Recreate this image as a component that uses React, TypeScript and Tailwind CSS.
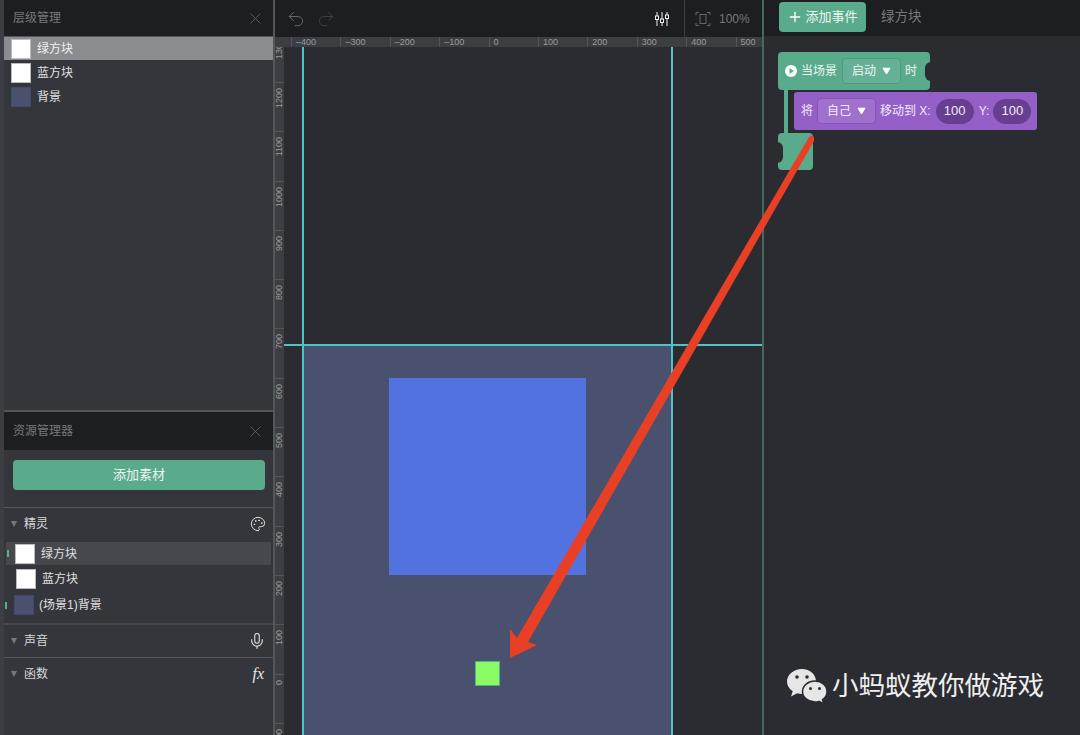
import { Mic, Palette, Plus, Redo2, Undo2, X } from "lucide-react";

const FONT = "font-['Liberation_Sans','Noto_Sans_CJK_SC',sans-serif]";

const xLabels = [-400, -300, -200, -100, 0, 100, 200, 300, 400, 500];
const yLabels = [1300, 1200, 1100, 1000, 900, 800, 700, 600, 500, 400, 300, 200, 100, 0, -100];

const PanelHeader = ({ title, height }: { title: string; height: string }) => (
  <header className={`${height} shrink-0 bg-[#1d1e22] flex items-center justify-between pl-[9px] pr-[8px]`}>
    <span className="text-xs text-[#77787c]">{title}</span>
    <X size={19} strokeWidth={1} className="text-[#66676b]" />
  </header>
);

const Section = ({ title, children }: { title: string; children: React.ReactNode }) => (
  <div className="flex items-center justify-between h-[32px] pl-[7px] pr-[7px]">
    <div className="flex items-center gap-[7px]">
      <span className="w-0 h-0 border-x-[3px] border-x-transparent border-t-[6px] border-t-[#77787c]"></span>
      <span className="text-xs text-[#d8d8da]">{title}</span>
    </div>
    {children}
  </div>
);

const Thumb = ({ blue }: { blue?: boolean }) =>
  blue ? (
    <div className="size-[20px] shrink-0 bg-[#4a516e] border border-[#44486a]"></div>
  ) : (
    <div className="size-[20px] shrink-0 bg-white border border-[#bbbbbb]"></div>
  );

const Triangle = () => (
  <svg width="9" height="8" viewBox="0 0 9 8" className="shrink-0">
    <path d="M1 1.200 H8 L4.500 7 Z" fill="#fff" stroke="#fff" strokeLinejoin="round" />
  </svg>
);

const App = () => {
  return (
    <div className={`${FONT} relative w-[1080px] h-[735px] overflow-hidden flex bg-[#2b2c31]`}>
      {/* Left panels */}
      <aside className="w-[275px] shrink-0 flex flex-col bg-[#35363b] border-l-[4px] border-l-[#3d3e43] border-r-2 border-r-[#55565a]">
        <section className="h-[410px] shrink-0 flex flex-col">
          <PanelHeader title="层级管理" height="h-[36px]" />
          <div className="flex items-center gap-[6px] h-[24px] pl-[7px] bg-[#8b8c90] border-t border-[#55565a]">
            <Thumb />
            <span className="text-xs text-[#f0f0f0]">绿方块</span>
          </div>
          <div className="flex items-center gap-[6px] h-[24px] mt-px pl-[7px]">
            <Thumb />
            <span className="text-xs text-[#e0e0e0]">蓝方块</span>
          </div>
          <div className="flex items-center gap-[6px] h-[24px] pl-[7px]">
            <Thumb blue />
            <span className="text-xs text-[#e0e0e0]">背景</span>
          </div>
        </section>
        <section className="flex-1 flex flex-col border-t-2 border-[#55565a]">
          <PanelHeader title="资源管理器" height="h-[38px]" />
          <div className="h-[58px] shrink-0 pt-[10px] px-[9px] border-b border-[#55565a]">
            <button className="w-[252px] h-[30px] rounded bg-[#5aaa8c] text-[13px] text-[#eef6f2]">添加素材</button>
          </div>
          <Section title="精灵">
            <Palette size={16} strokeWidth={1.4} className="text-[#e8e8e8]" />
          </Section>
          <div className="h-[85px] shrink-0 pt-[2px] border-b-2 border-[#47484d]">
            <div className="flex items-center h-[23px] ml-[2px] mr-[2px] bg-[#47484d]">
              <span className="w-[2px] h-[7px] ml-[1px] bg-[#5aaa8c]"></span>
              <span className="ml-[6px]">
                <Thumb />
              </span>
              <span className="ml-[6px] text-xs text-[#e0e0e0]">绿方块</span>
            </div>
            <div className="flex items-center h-[26px] mt-px pl-[12px]">
              <Thumb />
              <span className="ml-[6px] text-xs text-[#e0e0e0]">蓝方块</span>
            </div>
            <div className="flex items-center h-[26px] pl-[1px]">
              <span className="w-[2px] h-[7px] bg-[#5aaa8c]"></span>
              <span className="ml-[7px]">
                <Thumb blue />
              </span>
              <span className="ml-[5px] text-xs text-[#e0e0e0]">(场景1)背景</span>
            </div>
          </div>
          <div className="border-b border-[#55565a]">
            <Section title="声音">
              <Mic size={18} strokeWidth={1.4} className="text-[#e8e8e8]" />
            </Section>
          </div>
          <Section title="函数">
            <span className="font-['Liberation_Serif',serif] italic text-base text-[#e8e8e8] pr-[2px]">fx</span>
          </Section>
        </section>
      </aside>

      {/* Center */}
      <main className="w-[489px] shrink-0 flex flex-col border-r-2 border-[#4a6660]">
        <div className="h-[37px] shrink-0 bg-[#1d1e22] flex items-center pl-[11px]">
          <Undo2 size={20} strokeWidth={1.2} className="text-[#66676b]" />
          <Redo2 size={20} strokeWidth={1.2} className="ml-[10px] text-[#3d3e43]" />
          <svg width="16" height="16" viewBox="0 0 16 16" fill="none" stroke="#f0f0f0" strokeWidth="1" className="ml-[318px]">
            <path d="M3 1v4M3 9v6M8 1v7M8 12v3M13 1v3M13 8v7" />
            <rect x="1.500" y="5" width="3" height="3.500" />
            <rect x="6.500" y="8" width="3" height="3.500" />
            <rect x="11.500" y="4" width="3" height="3.500" />
          </svg>
          <div className="h-full ml-[14px] border-l border-[#3d3e43] flex items-center pl-[10px]">
            <svg width="16" height="16" viewBox="0 0 16 16" fill="none" stroke="#66676b" strokeWidth="1">
              <path d="M1 4V1.500H4M12 1.500H15V4M15 12V14.500H12M4 14.500H1V12" />
              <rect x="5" y="3.500" width="6" height="9" />
            </svg>
            <span className="ml-[8px] text-xs text-[#77787c]">100%</span>
          </div>
        </div>
        <div className="flex-1 flex min-h-0">
          {/* Vertical ruler */}
          <div className="w-[9px] shrink-0 bg-[#3d3e43] flex flex-col">
            <div className="h-[10px] shrink-0"></div>
            <div className="flex-1 min-h-0 overflow-hidden">
              <div className="flex flex-col mt-[-14.3px]">
                {yLabels.map((n) => (
                  <div key={n} className="h-[49.3px] shrink-0 border-t border-[#55565a] flex justify-center items-start pt-[5px]">
                    <span className="[writing-mode:vertical-rl] rotate-180 text-[9px] leading-[9px] text-[#9a9b9e]">{n}</span>
                  </div>
                ))}
              </div>
            </div>
          </div>
          <div className="flex-1 flex flex-col min-w-0">
            {/* Horizontal ruler */}
            <div className="h-[10px] shrink-0 bg-[#3d3e43] flex overflow-hidden pl-[7px]">
              {xLabels.map((n) => (
                <div key={n} className="w-[49.4px] shrink-0 border-l border-[#55565a] pl-[4px] text-[9px] leading-[10px] text-[#9a9b9e]">
                  {n < 0 ? `–${-n}` : n}
                </div>
              ))}
            </div>
            {/* Canvas */}
            <div className="relative flex-1 bg-[#2b2c31] overflow-hidden">
              <div className="absolute left-[19px] top-[298px] w-[369px] bottom-0 bg-[#4a516e]"></div>
              <div className="absolute left-[105px] top-[331px] size-[197px] bg-[#5272e0]"></div>
              <div className="absolute left-[191px] top-[614px] size-[25px] bg-[#8afc63] border border-[#5aaa8c]"></div>
              <div className="absolute left-0 right-0 top-[297px] h-[2px] bg-[#4fc4c6]"></div>
              <div className="absolute left-[18px] top-0 bottom-0 w-[2px] bg-[#4fc4c6]"></div>
              <div className="absolute left-[387px] top-0 bottom-0 w-[2px] bg-[#4fc4c6]"></div>
            </div>
          </div>
        </div>
      </main>

      {/* Right panel */}
      <aside className="flex-1 flex flex-col">
        <div className="h-[36px] shrink-0 bg-[#1d1e22] flex items-start pt-[2px] pl-[15px]">
          <button className="w-[87px] h-[30px] rounded bg-[#5aaa8c] flex items-center justify-center gap-[2px] text-[13px] text-[#eef6f2]">
            <Plus size={16} strokeWidth={2} className="text-white" />
            添加事件
          </button>
          <span className="ml-[15px] mt-[6px] text-[13.5px] leading-[18px] text-[#77787c]">绿方块</span>
        </div>
        <div className="relative flex-1 pt-[16px] pl-[14px]">
          {/* Hat block */}
          <div className="relative flex items-center h-[38px] w-[152px] rounded-[4px] bg-[#5aaa8c] pl-[7px] text-xs text-[#eef6f2]">
            <svg width="12" height="12" viewBox="0 0 12 12" className="shrink-0">
              <circle cx="6" cy="6" r="6" fill="#fff" />
              <path d="M4.500 3.200 L9 6 L4.500 8.800 Z" fill="#5aaa8c" />
            </svg>
            <span className="ml-[4px]">当场景</span>
            <div className="ml-[5px] w-[59px] h-[26px] rounded-[4px] bg-[#67b098] border border-[#4f9a7f] flex items-center justify-center gap-[6px]">
              启动
              <Triangle />
            </div>
            <span className="ml-[4px]">时</span>
            <span className="absolute right-[-1px] top-[10px] w-[6px] h-[19px] rounded-l-full bg-[#2b2c31]"></span>
          </div>
          {/* Stack */}
          <div className="flex">
            <div className="ml-[6px] w-[4px] h-[43px] bg-[#5aaa8c]"></div>
            <div className="ml-[6px] mt-[2px] flex items-center h-[38px] w-[243px] rounded-[3px] bg-[#9460c8] pl-[7px] text-xs text-[#f2eaf8]">
              将
              <div className="ml-[4px] w-[59px] h-[26px] rounded-[4px] bg-[#a070cf] border border-[#8455b5] flex items-center justify-center gap-[6px]">
                自己
                <Triangle />
              </div>
              <span className="ml-[4px]">移动到 X:</span>
              <span className="ml-[5px] w-[38px] h-[25px] rounded-full bg-[#683f90] flex items-center justify-center text-[13px]">100</span>
              <span className="ml-[5px]">Y:</span>
              <span className="ml-[4px] w-[38px] h-[25px] rounded-full bg-[#683f90] flex items-center justify-center text-[13px]">100</span>
            </div>
          </div>
          {/* End block */}
          <div className="relative w-[35px] h-[37px] rounded-[4px] bg-[#5aaa8c]">
            <span className="absolute left-[-1px] top-[9px] w-[6px] h-[21px] rounded-r-full bg-[#2b2c31]"></span>
          </div>
          {/* Watermark */}
          <div className="absolute left-[22px] top-[632px] flex items-center">
            <svg width="42" height="36" viewBox="0 0 42 36" className="shrink-0">
              <path d="M16 1C7.700 1 1 6.600 1 13.500c0 4 2.200 7.400 5.700 9.700L5 28.500l6.200-3.200c1.600.4 3.200.7 4.800.7 8.300 0 14-5.600 14-12.500S24.300 1 16 1Z" fill="#e6e6e6" />
              <path d="M29 13c-7 0-12.500 4.700-12.500 10.500S22 34 29 34c1.400 0 2.700-.2 4-.6l4.800 2.600-1.300-4.300c2.900-1.900 4.500-4.900 4.500-8.200C41 17.700 36 13 29 13Z" fill="#e6e6e6" stroke="#2b2c31" strokeWidth="1.500" />
              <circle cx="11" cy="9" r="1.800" fill="#2b2c31" />
              <circle cx="21" cy="9" r="1.800" fill="#2b2c31" />
              <circle cx="24.500" cy="20.500" r="1.500" fill="#2b2c31" />
              <circle cx="33.500" cy="20.500" r="1.500" fill="#2b2c31" />
            </svg>
            <span className="ml-[4px] text-[26.5px] leading-none text-[#efefef] whitespace-nowrap">小蚂蚁教你做游戏</span>
          </div>
        </div>
      </aside>

      {/* Red arrow over everything */}
      <svg width="1080" height="735" viewBox="0 0 1080 735" className="absolute left-0 top-0 pointer-events-none">
        <path
          d="M809 137 Q812 134 814 137 L814 141 L528 642 L537 645 L510 658 L510 629 L517 638 Z"
          fill="#e94025"
        />
      </svg>
    </div>
  );
};

export default App;
